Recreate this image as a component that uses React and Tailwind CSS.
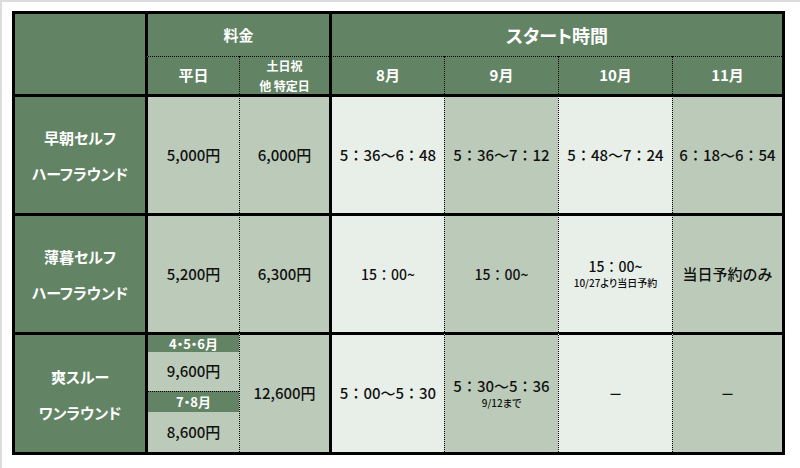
import React from "react";

const green = "bg-[#628464]";
const sage = "bg-[#bccbb9]";
const light = "bg-[#e8efe9]";

function Cell({ className = "", children }) {
  return (
    <div className={`flex flex-col items-center justify-center border-black ${className}`}>
      {children}
    </div>
  );
}

function Label({ top, bottom }) {
  return (
    <Cell className={`${green} border-t-[3px] text-white font-bold text-[15px] gap-[18px] pt-[2px] [font-feature-settings:'palt']`}>
      <span className="leading-[18px]">{top}</span>
      <span className="leading-[18px]">{bottom}</span>
    </Cell>
  );
}

const solidL = "border-l-[3px]";
const dotL = "border-l [border-left-style:dotted]";

export default function App() {
  return (
    <div
      className="w-[800px] h-[468px] bg-white border-t-2 border-l-2 border-[#dcdcdc] pl-[10px] pt-[9px] text-[#111] font-medium"
      style={{ fontFamily: '"Noto Sans CJK JP", "Noto Sans", sans-serif' }}
    >
      <div className="w-[773px] border-[3px] border-black">
        <div className="grid grid-cols-[130px_94px_90px_115px_114px_114px_110px] grid-rows-[42px_38px_119px_119px_120px]">
          {/* header */}
          <div className={`${green} row-span-2`} />
          <Cell className={`${green} col-span-2 ${solidL} text-white font-bold text-[15px]`}>料金</Cell>
          <Cell className={`${green} col-span-4 ${solidL} text-white font-bold text-[18px] [font-feature-settings:'palt']`}>スタート時間</Cell>

          <Cell className={`${green} ${solidL} border-t [border-top-style:dotted] text-white font-bold text-[15px]`}>平日</Cell>
          <Cell className={`${green} border-l border-t border-dotted text-white font-bold text-[12px] leading-[20px] pt-[1px]`}>
            <span>土日祝</span>
            <span>他 特定日</span>
          </Cell>
          <Cell className={`${green} ${solidL} border-t [border-top-style:dotted] text-white font-bold text-[15px]`}>8月</Cell>
          <Cell className={`${green} border-l border-t border-dotted text-white font-bold text-[15px]`}>9月</Cell>
          <Cell className={`${green} border-l border-t border-dotted text-white font-bold text-[15px]`}>10月</Cell>
          <Cell className={`${green} border-l border-t border-dotted text-white font-bold text-[15px]`}>11月</Cell>

          {/* row 1 */}
          <Label top="早朝セルフ" bottom="ハーフラウンド" />
          <Cell className={`${sage} border-t-[3px] ${solidL} text-[15px]`}>5,000円</Cell>
          <Cell className={`${sage} border-t-[3px] ${dotL} text-[15px]`}>6,000円</Cell>
          <Cell className={`${light} border-t-[3px] ${solidL} text-[15px]`}>5：36～6：48</Cell>
          <Cell className={`${sage} border-t-[3px] ${dotL} text-[15px]`}>5：36～7：12</Cell>
          <Cell className={`${light} border-t-[3px] ${dotL} text-[15px]`}>5：48～7：24</Cell>
          <Cell className={`${sage} border-t-[3px] ${dotL} text-[15px]`}>6：18～6：54</Cell>

          {/* row 2 */}
          <Label top="薄暮セルフ" bottom="ハーフラウンド" />
          <Cell className={`${sage} border-t-[3px] ${solidL} text-[15px]`}>5,200円</Cell>
          <Cell className={`${sage} border-t-[3px] ${dotL} text-[15px]`}>6,300円</Cell>
          <Cell className={`${light} border-t-[3px] ${solidL} text-[14px]`}>15：00~</Cell>
          <Cell className={`${sage} border-t-[3px] ${dotL} text-[14px]`}>15：00~</Cell>
          <Cell className={`${light} border-t-[3px] ${dotL}`}>
            <span className="text-[14px] leading-[18px]">15：00~</span>
            <span className="text-[10px] leading-[16px] [font-feature-settings:'palt']">10/27より当日予約</span>
          </Cell>
          <Cell className={`${sage} border-t-[3px] ${dotL} text-[15px]`}>当日予約のみ</Cell>

          {/* row 3 */}
          <Label top="爽スルー" bottom="ワンラウンド" />
          <div className={`${sage} border-t-[3px] ${solidL} border-black flex flex-col text-[15px]`}>
            <div className={`${green} h-[17px] flex items-center justify-center text-white font-bold text-[13px] [font-feature-settings:'palt']`}>4・5・6月</div>
            <div className="h-[39px] flex items-center justify-center">9,600円</div>
            <div className={`${green} h-[21px] border-t border-dotted border-black flex items-center justify-center text-white font-bold text-[13px] [font-feature-settings:'palt']`}>7・8月</div>
            <div className="flex-1 flex items-center justify-center">8,600円</div>
          </div>
          <Cell className={`${sage} border-t-[3px] ${dotL} text-[15px]`}>12,600円</Cell>
          <Cell className={`${light} border-t-[3px] ${solidL} text-[15px]`}>5：00～5：30</Cell>
          <Cell className={`${sage} border-t-[3px] ${dotL}`}>
            <span className="text-[15px] leading-[18px]">5：30～5：36</span>
            <span className="text-[10px] leading-[16px] [font-feature-settings:'palt']">9/12まで</span>
          </Cell>
          <Cell className={`${light} border-t-[3px] ${dotL} text-[14px]`}>－</Cell>
          <Cell className={`${sage} border-t-[3px] ${dotL} text-[14px]`}>－</Cell>
        </div>
      </div>
    </div>
  );
}
